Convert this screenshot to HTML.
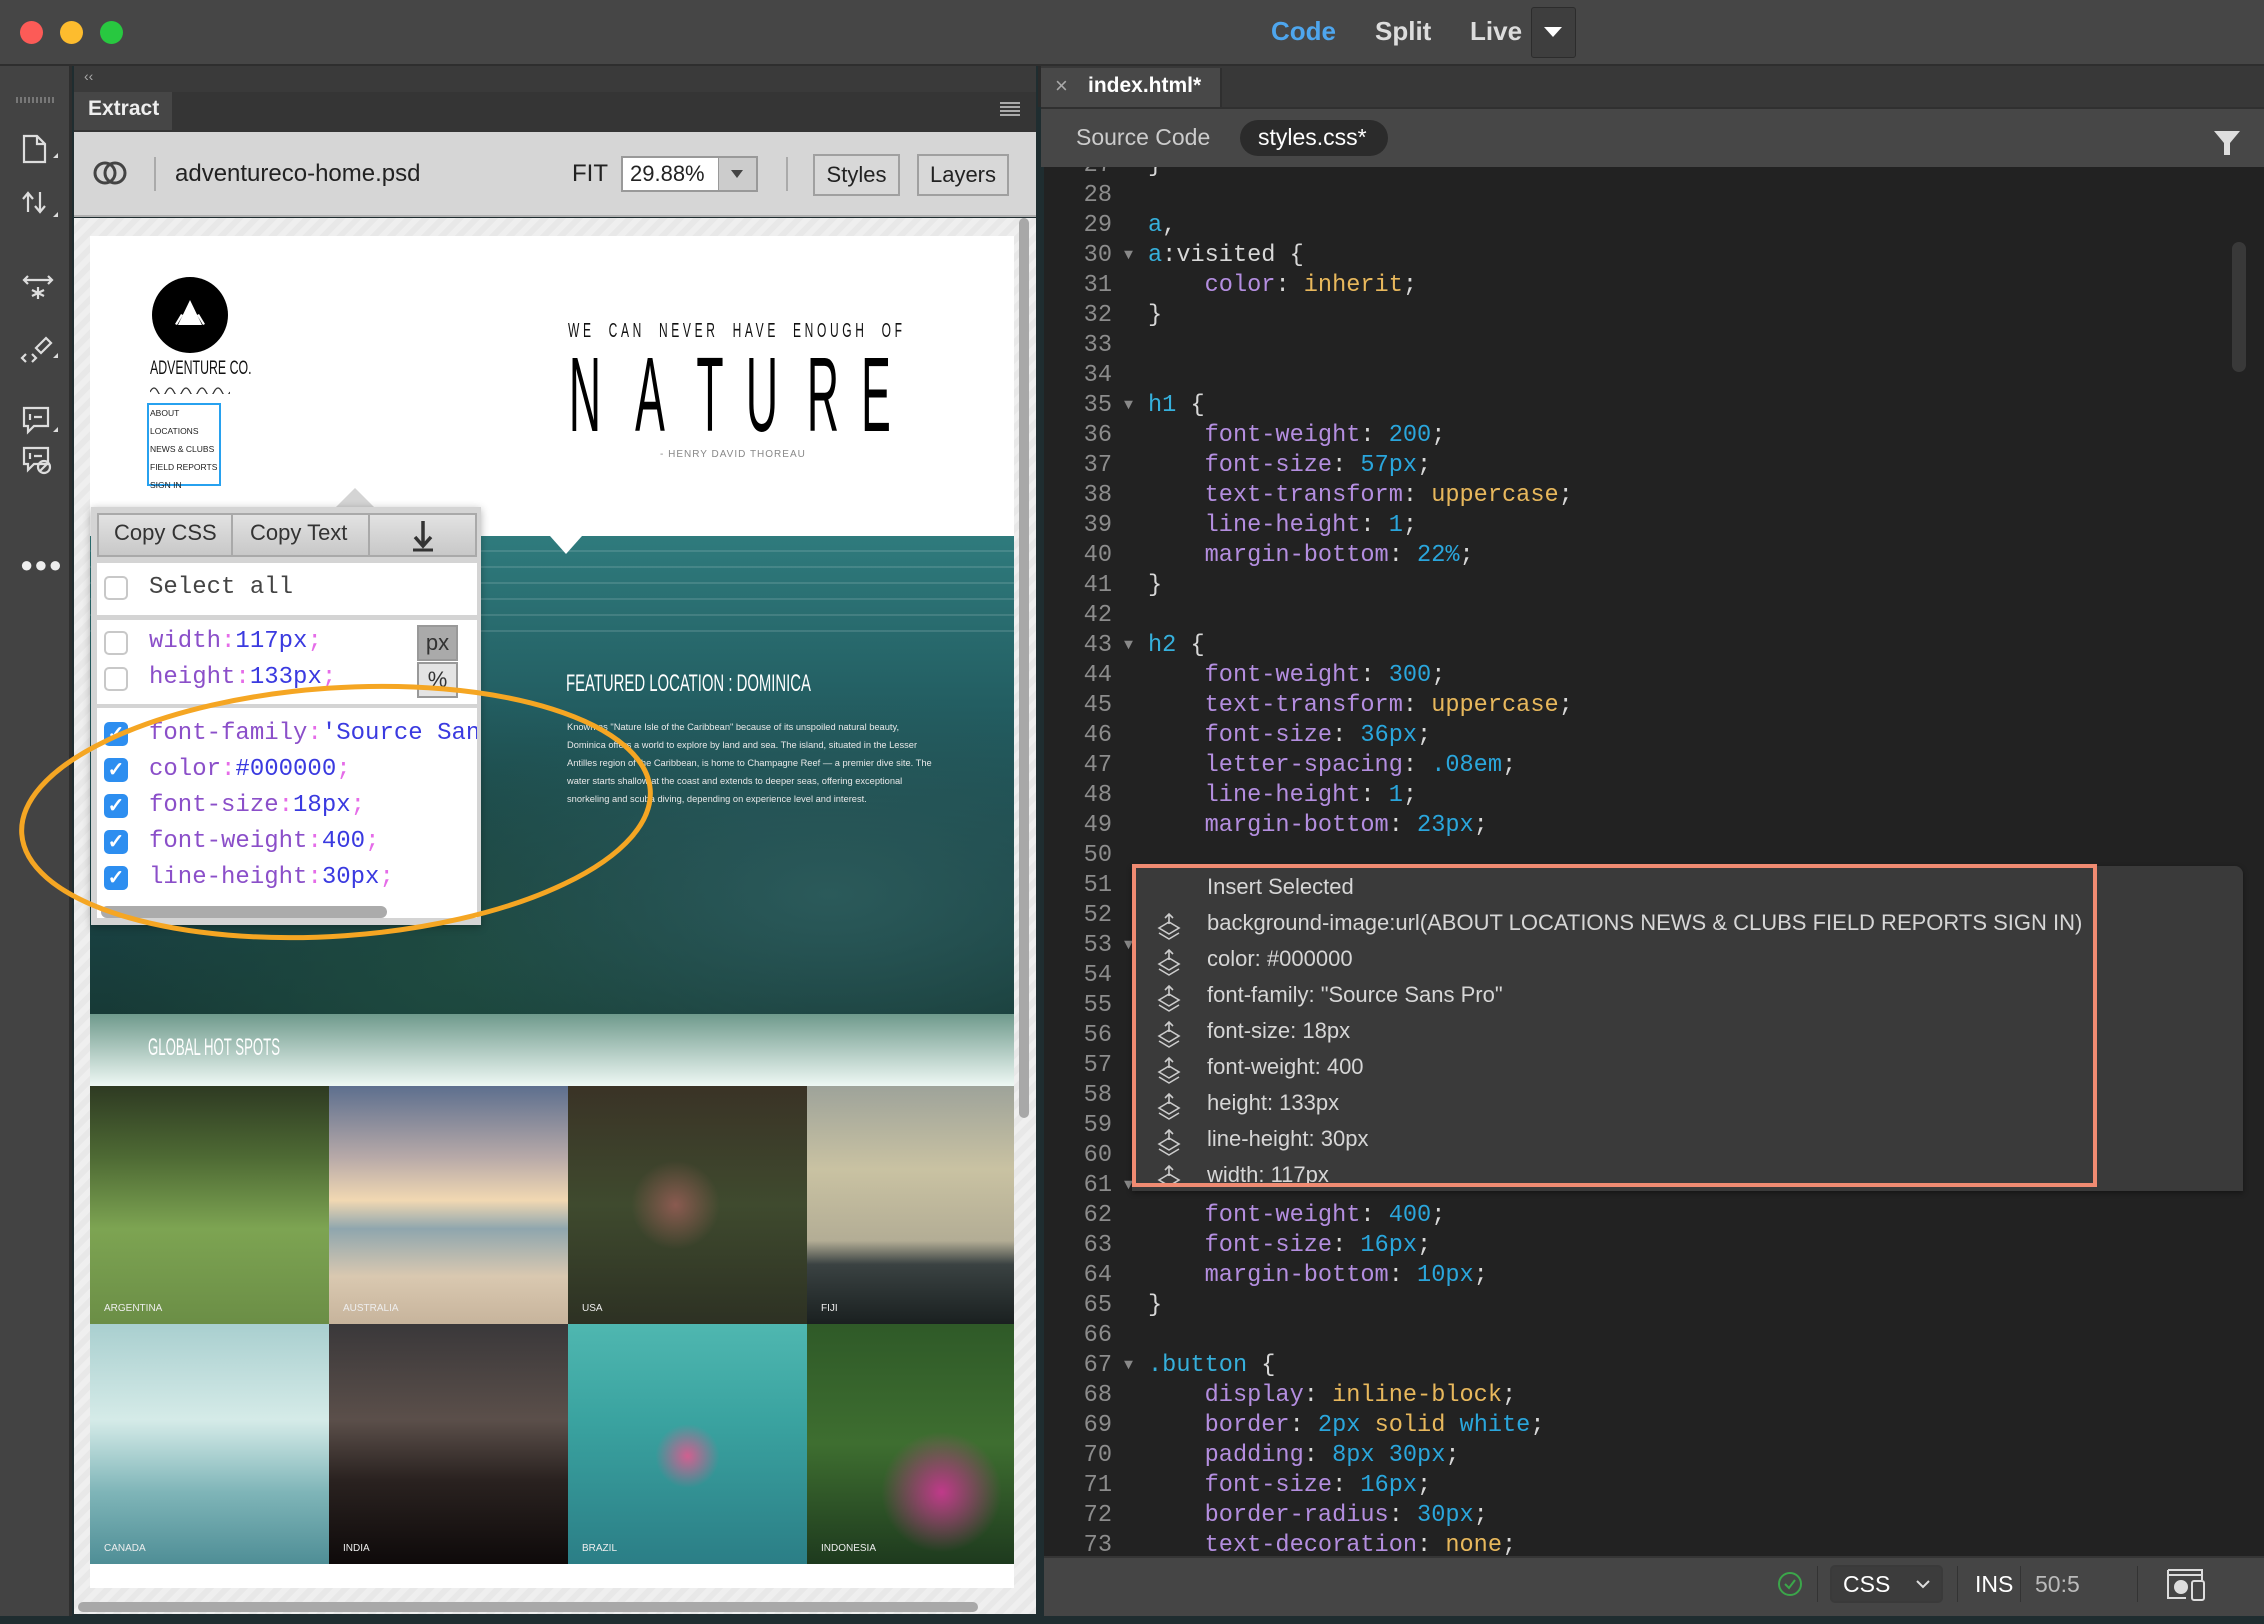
<!DOCTYPE html>
<html><head><meta charset="utf-8">
<style>
*{margin:0;padding:0;box-sizing:border-box}
body{width:2264px;height:1624px;background:#1f2d30;position:relative;overflow:hidden;font-family:"Liberation Sans",sans-serif}
.a{position:absolute}
.code{font-family:"Liberation Mono",monospace;font-size:23.6px;color:#d8d8d8;white-space:pre}
.ln{position:absolute;left:1060px;width:52px;text-align:right;color:#8c8c8c;font-family:"Liberation Mono",monospace;font-size:23.6px}
.cl{position:absolute;left:1148px}
.s{color:#36b0dc}.p{color:#b48ee0}.n{color:#2aa6dc}.k{color:#e8b85c}
.fold{position:absolute;left:1124px;color:#888;font-size:15px}
.cb{position:absolute;width:24px;height:24px;border:2px solid #c8c8c8;border-radius:5px;background:#fff}
.ck{position:absolute;width:24px;height:24px;border-radius:5px;background:#2d8ef0;color:#fff;font-size:20px;line-height:24px;text-align:center;font-weight:bold}
.pm{font-family:"Liberation Mono",monospace;font-size:24px;color:#8b4fc9;position:absolute;left:149px;white-space:pre}
.pm b{font-weight:normal;color:#3a3ae0}.pm i{font-style:normal;color:#e56ce8}
.ins{position:absolute;left:1207px;color:#d6d6d6;font-size:22px;font-family:"Liberation Sans Narrow","Liberation Sans",sans-serif}
.lab{position:absolute;color:#eee;font-size:10px;bottom:10px;left:14px}
.nl{position:absolute;top:340px;width:80px;text-align:center;font-size:106px;line-height:110px;color:#000;transform:scaleX(.42)}
</style></head><body>
<!-- title bar -->
<div class="a" style="left:0;top:0;width:2264px;height:66px;background:#464646;border-bottom:2px solid #2e2e2e"></div>
<div class="a" style="left:20px;top:21px;width:23px;height:23px;border-radius:50%;background:#fc5b57"></div>
<div class="a" style="left:60px;top:21px;width:23px;height:23px;border-radius:50%;background:#fdbc2e"></div>
<div class="a" style="left:100px;top:21px;width:23px;height:23px;border-radius:50%;background:#28c840"></div>
<div class="a" style="left:1271px;top:16px;font-size:26px;font-weight:bold;color:#4ea6ee">Code</div>
<div class="a" style="left:1375px;top:16px;font-size:26px;font-weight:bold;color:#ddd">Split</div>
<div class="a" style="left:1470px;top:16px;font-size:26px;font-weight:bold;color:#ddd">Live</div>
<div class="a" style="left:1531px;top:7px;width:45px;height:51px;border:1px solid #2c2c2c;border-radius:3px;background:#3e3e3e"></div>
<div class="a" style="left:1544px;top:27px;width:0;height:0;border-left:9px solid transparent;border-right:9px solid transparent;border-top:10px solid #fff"></div>

<!-- left toolbar -->
<div class="a" style="left:0;top:66px;width:72px;height:1550px;background:#434343;border-right:3px solid #2e2e2e"></div>
<div class="a" style="left:16px;top:97px;width:38px;height:6px;background:repeating-linear-gradient(90deg,#777 0 2px,transparent 2px 4px)"></div>
<svg class="a" style="left:18px;top:130px" width="44" height="450" viewBox="0 0 44 450" fill="none" stroke="#ddd" stroke-width="2.2">
<path d="M6 6h13l8 8v18H6z M19 6v8h8"/><path d="M35 28l5-5v5z" fill="#ddd" stroke="none"/>
<path d="M10 82V64M5 69l5-6 5 6M22 62v20M17 76l5 6 5-6"/><path d="M35 87l5-5v5z" fill="#ddd" stroke="none"/>
<path d="M6 150h28M10 146l-4 4 4 4M30 146l4 4-4 4M20 157v12M14 160l12 6M26 160l-12 6"/>
<path d="M8 224l-4 4 4 4M14 224l4 4-4 4M18 218l10-10 5 5-10 10z"/><path d="M35 228l5-5v5z" fill="#ddd" stroke="none"/>
<path d="M6 278h24v18H16l-6 6v-6H6z M12 284v6M16 287h8"/><path d="M35 302l5-5v5z" fill="#ddd" stroke="none"/>
<path d="M6 318h24v16H16l-6 6v-6H6z M12 323v6M16 326h8"/><circle cx="26" cy="337" r="6"/><path d="M22 341l8-8"/>
</svg>
<div class="a" style="left:20px;top:552px;font-size:22px;color:#eee;letter-spacing:1px">●●●</div>

<!-- left panel -->
<div class="a" style="left:74px;top:66px;width:962px;height:26px;background:#3a3a3a"></div>
<div class="a" style="left:84px;top:68px;font-size:14px;color:#aaa">‹‹</div>
<div class="a" style="left:74px;top:92px;width:962px;height:40px;background:#353535"></div>
<div class="a" style="left:74px;top:92px;width:98px;height:38px;background:#464646"></div>
<div class="a" style="left:88px;top:97px;font-size:21px;font-weight:bold;color:#eee">Extract</div>
<div class="a" style="left:1000px;top:102px;width:20px;height:14px;background:repeating-linear-gradient(#aaa 0 2px,transparent 2px 4px)"></div>
<!-- header -->
<div class="a" style="left:74px;top:132px;width:962px;height:85px;background:#d6d6d6;border-bottom:2px solid #b0b0b0"></div>
<svg class="a" style="left:92px;top:158px" width="36" height="30" viewBox="0 0 36 30" fill="none" stroke="#444" stroke-width="3"><circle cx="13" cy="15" r="10"/><circle cx="23" cy="15" r="10"/></svg>
<div class="a" style="left:154px;top:157px;width:2px;height:34px;background:#aaa"></div>
<div class="a" style="left:175px;top:160px;font-size:24px;color:#222">adventureco-home.psd</div>
<div class="a" style="left:572px;top:160px;font-size:24px;color:#222">FIT</div>
<div class="a" style="left:621px;top:156px;width:137px;height:36px;border:2px solid #999;background:#fff"></div>
<div class="a" style="left:630px;top:161px;font-size:22px;color:#222">29.88%</div>
<div class="a" style="left:718px;top:158px;width:38px;height:32px;background:#ccc;border-left:1px solid #999"></div>
<div class="a" style="left:731px;top:170px;border-left:6px solid transparent;border-right:6px solid transparent;border-top:8px solid #444"></div>
<div class="a" style="left:786px;top:157px;width:2px;height:34px;background:#aaa"></div>
<div class="a" style="left:813px;top:154px;width:87px;height:42px;border:2px solid #a0a0a0;background:#d8d8d8;font-size:22px;color:#222;text-align:center;line-height:38px">Styles</div>
<div class="a" style="left:917px;top:154px;width:92px;height:42px;border:2px solid #a0a0a0;background:#d8d8d8;font-size:22px;color:#222;text-align:center;line-height:38px">Layers</div>
<!-- canvas -->
<div class="a" style="left:74px;top:218px;width:962px;height:1396px;background:repeating-linear-gradient(135deg,#efefef 0 6px,#e8e8e8 6px 12px)"></div>
<div class="a" style="left:90px;top:236px;width:924px;height:1352px;background:#fff"></div>
<div class="a" style="left:1019px;top:218px;width:10px;height:900px;background:#a8a8a8;border-radius:5px"></div>
<div class="a" style="left:78px;top:1602px;width:900px;height:10px;background:#a8a8a8;border-radius:5px"></div>
<!-- design top -->
<div class="a" style="left:152px;top:277px;width:76px;height:76px;border-radius:50%;background:#000"></div>
<svg class="a" style="left:165px;top:290px" width="50" height="50" viewBox="0 0 50 50"><path d="M25 10L37 35H13z" fill="#fff"/><path d="M10 34l6-10 2 1-6 10z M40 34l-6-10-2 1 6 10z" fill="#fff"/></svg>
<div class="a" style="left:150px;top:358px;font-size:19px;font-family:'Liberation Sans Narrow','Liberation Sans';transform:scaleX(.65);transform-origin:left;color:#111;white-space:nowrap">ADVENTURE CO.</div>
<svg class="a" style="left:150px;top:384px" width="80" height="10"><path d="M0 8 q4-8 8 0 t8 0 t8 0 t8 0 t8 0 t8 0 t8 0 t8 0 t8 0 t8 0" fill="none" stroke="#333" stroke-width="1.3"/></svg>
<div class="a" style="left:147px;top:403px;width:74px;height:83px;border:2px solid #27a1ef"></div>
<div class="a" style="left:150px;top:404px;font-size:8.5px;line-height:18px;color:#222">ABOUT<br>LOCATIONS<br>NEWS &amp; CLUBS<br>FIELD REPORTS<br>SIGN IN</div>
<div class="a" style="left:568px;top:320px;width:320px;font-size:20px;color:#111;white-space:nowrap;letter-spacing:6.1px;transform:scaleX(.6);transform-origin:left">WE&nbsp;&nbsp;CAN&nbsp;&nbsp;NEVER&nbsp;&nbsp;HAVE&nbsp;&nbsp;ENOUGH&nbsp;&nbsp;OF</div>
<div class="nl" style="left:545px">N</div>
<div class="nl" style="left:610px">A</div>
<div class="nl" style="left:670px">T</div>
<div class="nl" style="left:722px">U</div>
<div class="nl" style="left:783px">R</div>
<div class="nl" style="left:836px">E</div>
<div class="a" style="left:660px;top:449px;font-size:10px;color:#888;letter-spacing:1px">- HENRY DAVID THOREAU</div>
<!-- hero -->
<div class="a" style="left:90px;top:536px;width:924px;height:478px;background:radial-gradient(ellipse at 80% 75%,#2b5a5a 0,transparent 40%),radial-gradient(ellipse at 40% 90%,#1e4a40 0,transparent 45%),linear-gradient(180deg,#2f7b7d 0%,#235e62 35%,#1a4448 70%,#173a36 100%)"></div>
<div class="a" style="left:90px;top:536px;width:924px;height:110px;background:repeating-linear-gradient(180deg,transparent 0 14px,rgba(255,255,255,.12) 14px 16px)"></div>
<div class="a" style="left:550px;top:536px;border-left:16px solid transparent;border-right:16px solid transparent;border-top:18px solid #fff"></div>
<div class="a" style="left:566px;top:670px;font-size:24px;color:#fff;font-family:'Liberation Sans Narrow','Liberation Sans';transform:scaleX(.62);transform-origin:left;white-space:nowrap">FEATURED LOCATION : DOMINICA</div>
<div class="a" style="left:567px;top:718px;width:370px;font-size:9.3px;line-height:18px;color:#e8e8e8;font-family:'Liberation Sans Narrow','Liberation Sans'">Known as "Nature Isle of the Caribbean" because of its unspoiled natural beauty, Dominica offers a world to explore by land and sea. The island, situated in the Lesser Antilles region of the Caribbean, is home to Champagne Reef — a premier dive site. The water starts shallow at the coast and extends to deeper seas, offering exceptional snorkeling and scuba diving, depending on experience level and interest.</div>
<div class="a" style="left:90px;top:1014px;width:924px;height:72px;background:linear-gradient(#6f9a8c,#eef8f4)"></div>
<div class="a" style="left:148px;top:1034px;font-size:24px;color:#fff;transform:scaleX(.55);transform-origin:left;white-space:nowrap">GLOBAL HOT SPOTS</div>
<!-- grid -->
<div class="a" style="left:90px;top:1086px;width:239px;height:238px;background:linear-gradient(#2e3a22 0%,#4e6a34 30%,#7da452 60%,#6b8e46 100%)"><span class="lab">ARGENTINA</span></div>
<div class="a" style="left:329px;top:1086px;width:239px;height:238px;background:linear-gradient(#5d6f8e 0%,#b7a9a8 30%,#f1d8b2 48%,#8fa6ae 60%,#d9c8b0 80%,#c7b49c 100%)"><span class="lab">AUSTRALIA</span></div>
<div class="a" style="left:568px;top:1086px;width:239px;height:238px;background:radial-gradient(circle at 45% 50%,#8a5a50 0,transparent 25%),linear-gradient(#3a3326,#3f4a2e 50%,#2d3123)"><span class="lab">USA</span></div>
<div class="a" style="left:807px;top:1086px;width:207px;height:238px;background:linear-gradient(#9ea39a 0%,#c9c2a2 35%,#b3ad95 65%,#3a4242 75%,#1a2020 100%)"><span class="lab">FIJI</span></div>
<div class="a" style="left:90px;top:1324px;width:239px;height:240px;background:linear-gradient(#a9cfcf,#d5ebe8 40%,#7fb5b8 70%,#4f8e96)"><span class="lab">CANADA</span></div>
<div class="a" style="left:329px;top:1324px;width:239px;height:240px;background:linear-gradient(#3a383a,#5b4f4a 40%,#2a2220 65%,#0e0a0a)"><span class="lab">INDIA</span></div>
<div class="a" style="left:568px;top:1324px;width:239px;height:240px;background:radial-gradient(circle at 50% 55%,#d06090 0,transparent 18%),linear-gradient(#4fb7b0,#3aa3a0 40%,#2b7e86 100%)"><span class="lab">BRAZIL</span></div>
<div class="a" style="left:807px;top:1324px;width:207px;height:240px;background:radial-gradient(circle at 65% 70%,#c03a8a 0,transparent 28%),linear-gradient(#2f5a28,#3e6e30 50%,#1e3a1e)"><span class="lab">INDONESIA</span></div>

<!-- extract popup -->
<div class="a" style="left:335px;top:488px;border-left:20px solid transparent;border-right:20px solid transparent;border-bottom:20px solid #d4d4d4"></div>
<div class="a" style="left:91px;top:507px;width:390px;height:418px;background:#d4d4d4;box-shadow:0 2px 8px rgba(0,0,0,.3)"></div>
<div class="a" style="left:97px;top:513px;width:380px;height:44px;border:2px solid #a9a9a9;background:linear-gradient(#e2e2e2,#c8c8c8)"></div>
<div class="a" style="left:231px;top:513px;width:2px;height:44px;background:#a9a9a9"></div>
<div class="a" style="left:368px;top:513px;width:2px;height:44px;background:#a9a9a9"></div>
<div class="a" style="left:114px;top:520px;font-size:22px;color:#333">Copy CSS</div>
<div class="a" style="left:250px;top:520px;font-size:22px;color:#333">Copy Text</div>
<svg class="a" style="left:408px;top:519px" width="30" height="34"><path d="M15 2v24M7 18l8 9 8-9" stroke="#333" stroke-width="3.5" fill="none"/><path d="M5 31h20" stroke="#333" stroke-width="3"/></svg>
<div class="a" style="left:97px;top:563px;width:380px;height:52px;background:#fff"></div>
<div class="cb" style="left:104px;top:576px"></div>
<div class="a" style="left:149px;top:574px;font-family:'Liberation Mono',monospace;font-size:24px;color:#444">Select all</div>
<div class="a" style="left:97px;top:620px;width:380px;height:84px;background:#fff"></div>
<div class="cb" style="left:104px;top:631px"></div><div class="cb" style="left:104px;top:667px"></div>
<div class="pm" style="top:628px">width<i>:</i><b>117px</b><i>;</i></div>
<div class="pm" style="top:664px">height<i>:</i><b>133px</b><i>;</i></div>
<div class="a" style="left:417px;top:625px;width:41px;height:36px;background:#aaa;border:2px solid #999;font-size:22px;text-align:center;color:#333;line-height:32px">px</div>
<div class="a" style="left:417px;top:662px;width:41px;height:36px;background:#e4e4e4;border:2px solid #999;font-size:22px;text-align:center;color:#333;line-height:32px">%</div>
<div class="a" style="left:97px;top:708px;width:380px;height:210px;background:#fff;overflow:hidden">
<div class="ck" style="left:7px;top:14px">✓</div><div class="ck" style="left:7px;top:50px">✓</div><div class="ck" style="left:7px;top:86px">✓</div><div class="ck" style="left:7px;top:122px">✓</div><div class="ck" style="left:7px;top:158px">✓</div>
<div class="pm" style="left:52px;top:12px">font-family<i>:</i><b>'Source Sans Pro'</b></div>
<div class="pm" style="left:52px;top:48px">color<i>:</i><b>#000000</b><i>;</i></div>
<div class="pm" style="left:52px;top:84px">font-size<i>:</i><b>18px</b><i>;</i></div>
<div class="pm" style="left:52px;top:120px">font-weight<i>:</i><b>400</b><i>;</i></div>
<div class="pm" style="left:52px;top:156px">line-height<i>:</i><b>30px</b><i>;</i></div>
<div class="a" style="left:4px;top:198px;width:286px;height:12px;border-radius:6px;background:#ababab"></div>
</div>
<svg class="a" style="left:0;top:660px" width="680" height="300"><ellipse cx="336" cy="152" rx="315" ry="124" transform="rotate(-4 336 152)" fill="none" stroke="#f5a623" stroke-width="5"/></svg>

<!-- right panel -->
<div class="a" style="left:1038px;top:66px;width:1226px;height:41px;background:#383838;border-left:3px solid #2a2a2a"></div>
<div class="a" style="left:1041px;top:68px;width:181px;height:39px;background:#484848;border-right:2px solid #2f2f2f"></div>
<div class="a" style="left:1055px;top:73px;font-size:22px;color:#aaa">×</div>
<div class="a" style="left:1088px;top:74px;font-size:21px;font-weight:bold;color:#fff">index.html*</div>
<div class="a" style="left:1041px;top:107px;width:1223px;height:60px;background:#474747;border-top:2px solid #303030"></div>
<div class="a" style="left:1076px;top:124px;font-size:23px;color:#ccc">Source Code</div>
<div class="a" style="left:1240px;top:120px;width:148px;height:36px;border-radius:18px;background:#2b2b2b"></div>
<div class="a" style="left:1258px;top:124px;font-size:23px;color:#fff">styles.css*</div>
<svg class="a" style="left:2212px;top:128px" width="30" height="30"><path d="M2 3h26L18 15v12l-6 0V15z" fill="#ddd"/></svg>
<div class="a" style="left:1044px;top:167px;width:1220px;height:1389px;background:#222"></div>
<div class="a" style="left:2232px;top:242px;width:14px;height:130px;border-radius:7px;background:#393939"></div>
<div class="a code" style="left:0;top:167px;width:2264px;height:1389px;overflow:hidden">
<div class="a" style="left:0;top:-167px;width:2264px;height:1700px">
<div class="ln" style="top:152px">27</div><div class="cl" style="top:152px">}</div>
<div class="ln" style="top:182px">28</div>
<div class="ln" style="top:212px">29</div><div class="cl" style="top:212px"><span class="s">a</span>,</div>
<div class="ln" style="top:242px">30</div><div class="fold" style="top:247px">▼</div><div class="cl" style="top:242px"><span class="s">a</span>:visited {</div>
<div class="ln" style="top:272px">31</div><div class="cl" style="top:272px">    <span class="p">color</span>: <span class="k">inherit</span>;</div>
<div class="ln" style="top:302px">32</div><div class="cl" style="top:302px">}</div>
<div class="ln" style="top:332px">33</div>
<div class="ln" style="top:362px">34</div>
<div class="ln" style="top:392px">35</div><div class="fold" style="top:397px">▼</div><div class="cl" style="top:392px"><span class="s">h1</span> {</div>
<div class="ln" style="top:422px">36</div><div class="cl" style="top:422px">    <span class="p">font-weight</span>: <span class="n">200</span>;</div>
<div class="ln" style="top:452px">37</div><div class="cl" style="top:452px">    <span class="p">font-size</span>: <span class="n">57px</span>;</div>
<div class="ln" style="top:482px">38</div><div class="cl" style="top:482px">    <span class="p">text-transform</span>: <span class="k">uppercase</span>;</div>
<div class="ln" style="top:512px">39</div><div class="cl" style="top:512px">    <span class="p">line-height</span>: <span class="n">1</span>;</div>
<div class="ln" style="top:542px">40</div><div class="cl" style="top:542px">    <span class="p">margin-bottom</span>: <span class="n">22%</span>;</div>
<div class="ln" style="top:572px">41</div><div class="cl" style="top:572px">}</div>
<div class="ln" style="top:602px">42</div>
<div class="ln" style="top:632px">43</div><div class="fold" style="top:637px">▼</div><div class="cl" style="top:632px"><span class="s">h2</span> {</div>
<div class="ln" style="top:662px">44</div><div class="cl" style="top:662px">    <span class="p">font-weight</span>: <span class="n">300</span>;</div>
<div class="ln" style="top:692px">45</div><div class="cl" style="top:692px">    <span class="p">text-transform</span>: <span class="k">uppercase</span>;</div>
<div class="ln" style="top:722px">46</div><div class="cl" style="top:722px">    <span class="p">font-size</span>: <span class="n">36px</span>;</div>
<div class="ln" style="top:752px">47</div><div class="cl" style="top:752px">    <span class="p">letter-spacing</span>: <span class="n">.08em</span>;</div>
<div class="ln" style="top:782px">48</div><div class="cl" style="top:782px">    <span class="p">line-height</span>: <span class="n">1</span>;</div>
<div class="ln" style="top:812px">49</div><div class="cl" style="top:812px">    <span class="p">margin-bottom</span>: <span class="n">23px</span>;</div>
<div class="ln" style="top:842px">50</div>
<div class="ln" style="top:872px">51</div>
<div class="ln" style="top:902px">52</div>
<div class="ln" style="top:932px">53</div><div class="fold" style="top:937px">▼</div>
<div class="ln" style="top:962px">54</div>
<div class="ln" style="top:992px">55</div>
<div class="ln" style="top:1022px">56</div>
<div class="ln" style="top:1052px">57</div>
<div class="ln" style="top:1082px">58</div>
<div class="ln" style="top:1112px">59</div>
<div class="ln" style="top:1142px">60</div>
<div class="ln" style="top:1172px">61</div><div class="fold" style="top:1177px">▼</div>
<div class="ln" style="top:1202px">62</div><div class="cl" style="top:1202px">    <span class="p">font-weight</span>: <span class="n">400</span>;</div>
<div class="ln" style="top:1232px">63</div><div class="cl" style="top:1232px">    <span class="p">font-size</span>: <span class="n">16px</span>;</div>
<div class="ln" style="top:1262px">64</div><div class="cl" style="top:1262px">    <span class="p">margin-bottom</span>: <span class="n">10px</span>;</div>
<div class="ln" style="top:1292px">65</div><div class="cl" style="top:1292px">}</div>
<div class="ln" style="top:1322px">66</div>
<div class="ln" style="top:1352px">67</div><div class="fold" style="top:1357px">▼</div><div class="cl" style="top:1352px"><span class="s">.button</span> {</div>
<div class="ln" style="top:1382px">68</div><div class="cl" style="top:1382px">    <span class="p">display</span>: <span class="k">inline-block</span>;</div>
<div class="ln" style="top:1412px">69</div><div class="cl" style="top:1412px">    <span class="p">border</span>: <span class="n">2px</span> <span class="k">solid</span> <span class="n">white</span>;</div>
<div class="ln" style="top:1442px">70</div><div class="cl" style="top:1442px">    <span class="p">padding</span>: <span class="n">8px 30px</span>;</div>
<div class="ln" style="top:1472px">71</div><div class="cl" style="top:1472px">    <span class="p">font-size</span>: <span class="n">16px</span>;</div>
<div class="ln" style="top:1502px">72</div><div class="cl" style="top:1502px">    <span class="p">border-radius</span>: <span class="n">30px</span>;</div>
<div class="ln" style="top:1532px">73</div><div class="cl" style="top:1532px">    <span class="p">text-decoration</span>: <span class="k">none</span>;</div>
</div>
</div>
<div class="a" style="left:1044px;top:1556px;width:1220px;height:60px;background:#454545;border-top:2px solid #353535"></div>

<!-- insert popup -->
<div class="a" style="left:1132px;top:866px;width:1111px;height:325px;background:#3a3a3a;border-radius:0 8px 0 0;box-shadow:0 2px 6px rgba(0,0,0,.4)"></div>
<div class="a" style="left:1132px;top:864px;width:965px;height:323px;border:4px solid #f08b72"></div>
<div class="a" style="left:1136px;top:868px;width:957px;height:315px;overflow:hidden">
<div class="ins" style="left:71px;top:6px">Insert Selected</div>
<div class="ins" style="left:71px;top:42px">background-image:url(ABOUT LOCATIONS NEWS &amp; CLUBS FIELD REPORTS SIGN IN)</div>
<div class="ins" style="left:71px;top:78px">color: #000000</div>
<div class="ins" style="left:71px;top:114px">font-family: "Source Sans Pro"</div>
<div class="ins" style="left:71px;top:150px">font-size: 18px</div>
<div class="ins" style="left:71px;top:186px">font-weight: 400</div>
<div class="ins" style="left:71px;top:222px">height: 133px</div>
<div class="ins" style="left:71px;top:258px">line-height: 30px</div>
<div class="ins" style="left:71px;top:294px">width: 117px</div>
<svg class="a" style="left:20px;top:44px" width="30" height="290" fill="none" stroke="#ccc" stroke-width="1.6">
<g id="g"><path d="M13 2v10M9 6l4-4 4 4M3 16l10-6 10 6-10 6zM3 21l10 6 10-6"/></g>
<use href="#g" y="36"/><use href="#g" y="72"/><use href="#g" y="108"/><use href="#g" y="144"/><use href="#g" y="180"/><use href="#g" y="216"/><use href="#g" y="252"/>
</svg>
</div>

<!-- status bar -->
<svg class="a" style="left:1776px;top:1570px" width="30" height="30"><circle cx="14" cy="14" r="11" fill="none" stroke="#3ba64a" stroke-width="2"/><path d="M9 14l4 4 6-8" fill="none" stroke="#3ba64a" stroke-width="2"/></svg>
<div class="a" style="left:1817px;top:1566px;width:1px;height:36px;background:#333"></div>
<div class="a" style="left:1830px;top:1565px;width:113px;height:38px;border:2px solid #3a3a3a;border-radius:5px;background:#3c3c3c"></div>
<div class="a" style="left:1843px;top:1571px;font-size:23px;color:#fff">CSS</div>
<svg class="a" style="left:1915px;top:1578px" width="16" height="12"><path d="M2 3l6 6 6-6" fill="none" stroke="#ddd" stroke-width="2"/></svg>
<div class="a" style="left:1957px;top:1566px;width:1px;height:36px;background:#333"></div>
<div class="a" style="left:1975px;top:1571px;font-size:23px;color:#fff">INS</div>
<div class="a" style="left:2020px;top:1566px;width:1px;height:36px;background:#333"></div>
<div class="a" style="left:2035px;top:1571px;font-size:23px;color:#bbb">50:5</div>
<div class="a" style="left:2137px;top:1566px;width:1px;height:36px;background:#333"></div>
<svg class="a" style="left:2166px;top:1568px" width="42" height="34" fill="none" stroke="#ddd" stroke-width="2"><path d="M2 2h34v10M2 2v28h18M2 7h34"/><circle cx="15" cy="19" r="6" fill="#ddd"/><rect x="26" y="13" width="12" height="19" rx="2"/></svg>
</body></html>
